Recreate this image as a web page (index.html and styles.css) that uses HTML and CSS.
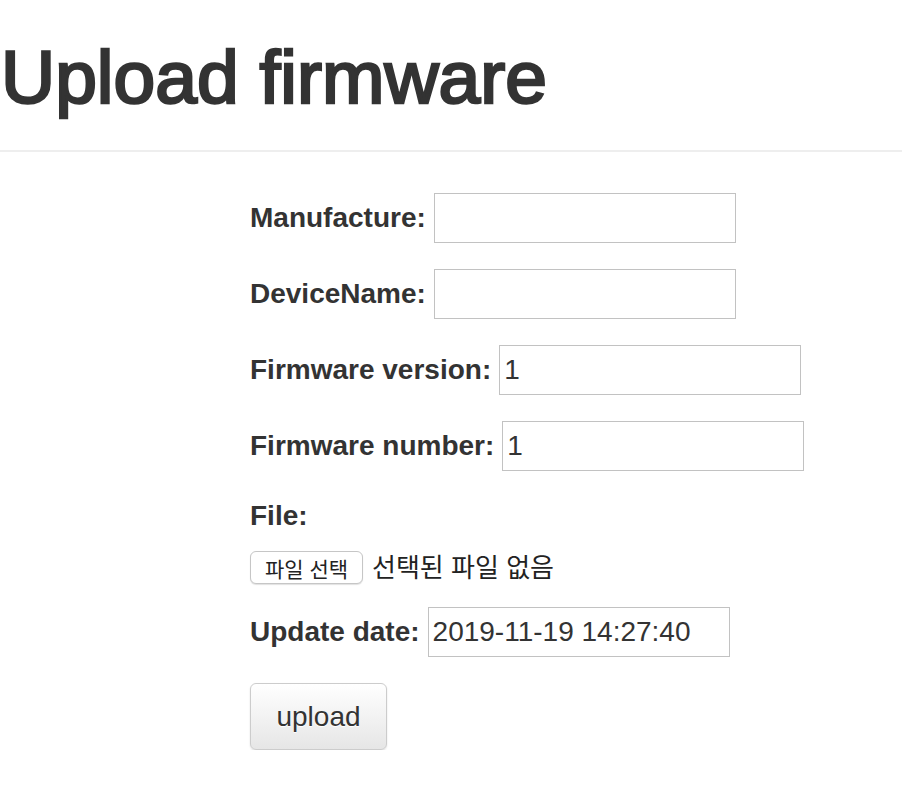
FILE: index.html
```html
<!DOCTYPE html>
<html lang="ko">
<head>
<meta charset="utf-8">
<title>Upload firmware</title>
<link rel="stylesheet" href="styles.css">
</head>
<body>
<header class="page-header">
  <h1 class="title">Upload firmware</h1>
</header>
<form class="upload-form">
  <div class="row">
    <label class="lbl" for="manufacture">Manufacture:</label>
    <input class="field" id="manufacture" type="text">
  </div>
  <div class="row">
    <label class="lbl" for="devicename">DeviceName:</label>
    <input class="field" id="devicename" type="text">
  </div>
  <div class="row">
    <label class="lbl" for="fwversion">Firmware version:</label>
    <input class="field" id="fwversion" type="text" value="1">
  </div>
  <div class="row">
    <label class="lbl" for="fwnumber">Firmware number:</label>
    <input class="field" id="fwnumber" type="text" value="1">
  </div>
  <div class="file-group">
    <div class="lbl file-lbl">File:</div>
    <div class="file-row">
      <span class="file-btn">파일 선택</span>
      <span class="file-none">선택된 파일 없음</span>
    </div>
  </div>
  <div class="row">
    <label class="lbl" for="updatedate">Update date:</label>
    <input class="field" id="updatedate" type="text" value="2019-11-19 14:27:40">
  </div>
  <div class="actions">
    <button class="upload-btn" type="button">upload</button>
  </div>
</form>
</body>
</html>
```

FILE: styles.css
```css
html, body {
  margin: 0;
  padding: 0;
  background: #ffffff;
}

body {
  font-family: "Liberation Sans", Helvetica, Arial, sans-serif;
  color: #333333;
}

.page-header {
  border-bottom: 2px solid #eeeeee;
  padding: 36px 0 32px 0;
}

.title {
  margin: 0;
  font-size: 75px;
  line-height: 82px;
  font-weight: normal;
  color: #333333;
  -webkit-text-stroke: 2.6px #333333;
  padding-left: 1px;
}

.upload-form {
  margin: 41px 0 0 250px;
  display: flex;
  flex-direction: column;
  gap: 26px;
}

.row {
  display: flex;
  align-items: center;
  gap: 8px;
  height: 50px;
}

.lbl {
  font-size: 28px;
  font-weight: bold;
  color: #333333;
  white-space: nowrap;
}

.field {
  box-sizing: border-box;
  width: 302px;
  height: 50px;
  margin: 0;
  border: 1px solid #c2c2c2;
  border-radius: 0;
  padding: 0 4px;
  font-family: "Liberation Sans", Helvetica, Arial, sans-serif;
  font-size: 28px;
  color: #333333;
  background: #ffffff;
  outline: none;
}

.file-group {
  display: flex;
  flex-direction: column;
  margin-bottom: -3px;
}

.file-lbl {
  line-height: 38px;
  margin-bottom: 16px;
}

.file-row {
  display: flex;
  align-items: center;
  gap: 9px;
  height: 33px;
}

.file-btn {
  box-sizing: border-box;
  width: 113px;
  height: 33px;
  display: flex;
  align-items: center;
  justify-content: center;
  border: 1px solid #c6c6c6;
  border-radius: 6px;
  background: #ffffff;
  box-shadow: 0 1px 1px rgba(0, 0, 0, 0.12);
  font-family: "Noto Sans CJK KR", sans-serif;
  font-size: 21px;
  color: #222222;
}

.file-none {
  font-family: "Noto Sans CJK KR", sans-serif;
  font-size: 26px;
  color: #222222;
  margin-top: -5px;
}

.upload-btn {
  box-sizing: border-box;
  width: 137px;
  height: 67px;
  margin: 0;
  border: 1px solid #cccccc;
  border-radius: 6px;
  background: linear-gradient(#ffffff, #e6e6e6);
  box-shadow: 0 1px 2px rgba(0, 0, 0, 0.12);
  font-family: "Liberation Sans", Helvetica, Arial, sans-serif;
  font-size: 28px;
  color: #333333;
  text-shadow: 0 1px 1px #ffffff;
  padding: 0;
}
```
